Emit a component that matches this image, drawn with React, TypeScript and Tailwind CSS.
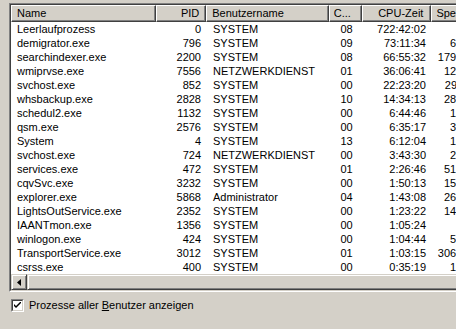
import React from 'react';

interface Proc {
    name: string;
    pid: string;
    user: string;
    cpu: string;
    time: string;
    mem: string;
}

const processes: Proc[] = [
    { name: 'Leerlaufprozess', pid: '0', user: 'SYSTEM', cpu: '08', time: '722:42:02', mem: '28 K' },
    { name: 'demigrator.exe', pid: '796', user: 'SYSTEM', cpu: '09', time: '73:11:34', mem: '6.412 K' },
    { name: 'searchindexer.exe', pid: '2200', user: 'SYSTEM', cpu: '08', time: '66:55:32', mem: '179.340 K' },
    { name: 'wmiprvse.exe', pid: '7556', user: 'NETZWERKDIENST', cpu: '01', time: '36:06:41', mem: '12.904 K' },
    { name: 'svchost.exe', pid: '852', user: 'SYSTEM', cpu: '00', time: '22:23:20', mem: '29.116 K' },
    { name: 'whsbackup.exe', pid: '2828', user: 'SYSTEM', cpu: '10', time: '14:34:13', mem: '28.452 K' },
    { name: 'schedul2.exe', pid: '1132', user: 'SYSTEM', cpu: '00', time: '6:44:46', mem: '1.876 K' },
    { name: 'qsm.exe', pid: '2576', user: 'SYSTEM', cpu: '00', time: '6:35:17', mem: '3.208 K' },
    { name: 'System', pid: '4', user: 'SYSTEM', cpu: '13', time: '6:12:04', mem: '1.104 K' },
    { name: 'svchost.exe', pid: '724', user: 'NETZWERKDIENST', cpu: '00', time: '3:43:30', mem: '2.960 K' },
    { name: 'services.exe', pid: '472', user: 'SYSTEM', cpu: '01', time: '2:26:46', mem: '51.228 K' },
    { name: 'cqvSvc.exe', pid: '3232', user: 'SYSTEM', cpu: '00', time: '1:50:13', mem: '15.640 K' },
    { name: 'explorer.exe', pid: '5868', user: 'Administrator', cpu: '04', time: '1:43:08', mem: '26.372 K' },
    { name: 'LightsOutService.exe', pid: '2352', user: 'SYSTEM', cpu: '00', time: '1:23:22', mem: '14.088 K' },
    { name: 'IAANTmon.exe', pid: '1356', user: 'SYSTEM', cpu: '00', time: '1:05:24', mem: '96 K' },
    { name: 'winlogon.exe', pid: '424', user: 'SYSTEM', cpu: '00', time: '1:04:44', mem: '5.532 K' },
    { name: 'TransportService.exe', pid: '3012', user: 'SYSTEM', cpu: '01', time: '1:03:15', mem: '306.120 K' },
    { name: 'csrss.exe', pid: '400', user: 'SYSTEM', cpu: '00', time: '0:35:19', mem: '1.452 K' },
];

function HeaderCell({
    label,
    className,
}: {
    label: string;
    className: string;
}) {
    return (
        <div
            className={`flex h-full items-center whitespace-nowrap border-t border-l border-t-white border-l-white border-r border-b border-r-[#404040] border-b-[#404040] shadow-[inset_-1px_-1px_0_#808080] ${className}`}
        >
            {label}
        </div>
    );
}

function ScrollLeftButton() {
    return (
        <div className="flex h-[16px] w-[16px] shrink-0 items-center justify-center border-t border-l border-t-[#d4d0c8] border-l-[#d4d0c8] border-r border-b border-r-[#404040] border-b-[#404040] bg-[#d4d0c8] shadow-[inset_1px_1px_0_#ffffff,inset_-1px_-1px_0_#808080]">
            <svg width="4" height="7" viewBox="0 0 4 7">
                <path d="M4 0 L0 3.5 L4 7 Z" fill="#000" />
            </svg>
        </div>
    );
}

export default function App() {
    return (
        <div
            className="h-[329px] w-[456px] overflow-hidden bg-[#d4d0c8] text-[11px] text-black"
            style={{ fontFamily: '"Liberation Sans", Arial, sans-serif' }}
        >
            <div className="ml-[9px] mt-[3px] w-[520px] border-t border-l border-t-[#808080] border-l-[#808080] border-b border-r border-b-white border-r-white">
                <div className="border-t border-l border-t-[#404040] border-l-[#404040] border-b border-r border-b-[#d4d0c8] border-r-[#d4d0c8] bg-white">
                    <div className="flex h-[17px] bg-[#d4d0c8] leading-none">
                        <HeaderCell label="Name" className="w-[146px] pl-[5px]" />
                        <HeaderCell label="PID" className="w-[50px] justify-end pr-[6px]" />
                        <HeaderCell label="Benutzername" className="w-[123px] pl-[5px]" />
                        <HeaderCell label="C..." className="w-[33px] pl-[4px]" />
                        <HeaderCell label="CPU-Zeit" className="w-[70px] justify-end pr-[7px]" />
                        <HeaderCell label="Speichernutzung" className="w-[96px] pl-[4px]" />
                    </div>

                    {processes.map((p, i) => (
                        <div key={i} className="flex h-[14px] items-center whitespace-nowrap leading-[14px]">
                            <div className="w-[146px] pl-[6px]">{p.name}</div>
                            <div className="w-[50px] pr-[6px] text-right">{p.pid}</div>
                            <div className="w-[123px] pl-[6px]">{p.user}</div>
                            <div className="w-[33px] text-center">{p.cpu}</div>
                            <div className="w-[70px] pr-[7px] text-right">{p.time}</div>
                            <div className="flex w-[61px] justify-end pr-[6px]">{p.mem}</div>
                        </div>
                    ))}

                    <div className="flex h-[16px] bg-[#d4d0c8]">
                        <ScrollLeftButton />
                        <div className="h-[16px] flex-1 border-t border-l border-t-[#d4d0c8] border-l-[#d4d0c8] border-r border-b border-r-[#404040] border-b-[#404040] bg-[#d4d0c8] shadow-[inset_1px_1px_0_#ffffff,inset_-1px_-1px_0_#808080]" />
                    </div>
                </div>
            </div>

            <label className="ml-[11px] mt-[7px] flex items-center gap-[5px]">
                <span className="flex h-[13px] w-[13px] items-center justify-center border-t border-l border-t-[#808080] border-l-[#808080] border-b border-r border-b-white border-r-white">
                    <span className="flex h-[11px] w-[11px] items-center justify-center border-t border-l border-t-[#404040] border-l-[#404040] border-b border-r border-b-[#d4d0c8] border-r-[#d4d0c8] bg-white">
                        <svg width="7" height="7" viewBox="0 0 7 7">
                            <path d="M0 2 L0 4 L2 6 L7 1 L7 -1 L2 4 Z" fill="#000" />
                        </svg>
                    </span>
                </span>
                <span className="leading-[13px]">
                    Prozesse aller <span className="underline">B</span>enutzer anzeigen
                </span>
            </label>
        </div>
    );
}
